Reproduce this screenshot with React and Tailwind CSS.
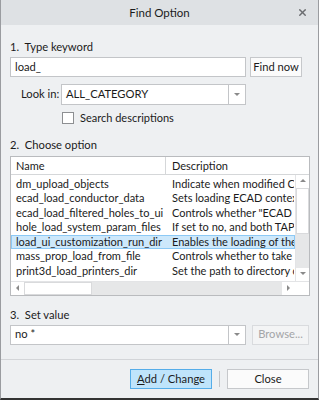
import { X } from 'lucide-react'

const rows = [
  ['dm_upload_objects', 'Indicate when modified Creo'],
  ['ecad_load_conductor_data', 'Sets loading ECAD context'],
  ['ecad_load_filtered_holes_to_ui', 'Controls whether "ECAD in'],
  ['hole_load_system_param_files', 'If set to no, and both TAP a'],
  ['load_ui_customization_run_dir', 'Enables the loading of the'],
  ['mass_prop_load_from_file', 'Controls whether to take in'],
  ['print3d_load_printers_dir', 'Set the path to directory co'],
]

function Arrow({ dir = 'down', className = '' }) {
  const pts = {
    down: '1,2 7,2 4,5',
    up: '1,5 7,5 4,2',
    left: '5,1 5,7 2,4',
    right: '2,1 2,7 5,4',
  }
  return (
    <svg width="8" height="8" viewBox="0 0 8 8" className={className}>
      <polygon points={pts[dir]} fill="#8a8a8a" />
    </svg>
  )
}

function Combo({ value, className = '' }) {
  return (
    <div className={`flex h-[20px] border border-[#c3c5c8] bg-white ${className}`}>
      <div className="flex flex-1 items-center pl-[4px] text-[#1b1b1b]">{value}</div>
      <div className="flex w-[17px] items-center justify-center border-l border-[#c3c5c8]">
        <Arrow />
      </div>
    </div>
  )
}

function Button({ children, className = '' }) {
  return (
    <div
      className={`flex h-[20px] items-center justify-center border border-[#c6c8cb] bg-[#fbfbfb] text-[#1b1b1b] ${className}`}
    >
      {children}
    </div>
  )
}

export default function App() {
  return (
    <div
      className="flex h-[400px] w-[319px] flex-col border-x border-b-2 border-x-[#9a9ca0] border-b-[#333] bg-[#eef0f2] text-[11.2px]"
      style={{ fontFamily: 'Lato, "Noto Sans", sans-serif' }}
    >
      <div className="relative flex h-[25px] shrink-0 items-center justify-center bg-[#dee1e4] text-[11.5px] text-[#1b1b1b]">
        Find Option
        <X size={11} strokeWidth={3} className="absolute right-[10px] top-[7px] text-[#6b6d70]" />
      </div>

      <div className="flex flex-1 flex-col px-[9px]">
        <div className="mt-[14px] h-[16px] leading-[16px] text-[#1b1b1b]">1.&nbsp; Type keyword</div>
        <div className="mt-[2px] flex gap-[4px]">
          <div className="flex h-[20px] w-[236px] items-center border border-[#c3c5c8] bg-white pl-[4px] text-[#1b1b1b]">
            load_
          </div>
          <Button className="w-[52px]">Find now</Button>
        </div>

        <div className="mt-[7px] flex items-center">
          <div className="w-[51px] shrink-0 whitespace-nowrap pl-[11px] text-[#1b1b1b]">Look in:</div>
          <Combo value="ALL_CATEGORY" className="h-[21px] w-[185px]" />
        </div>
        <div className="mt-[5px] flex items-center pl-[52px]">
          <div className="h-[12px] w-[12px] border border-[#8d8f92] bg-white" />
          <span className="ml-[6px] text-[11px] text-[#1b1b1b]">Search descriptions</span>
        </div>

        <div className="mt-[10px] h-[16px] leading-[16px] text-[#1b1b1b]">2.&nbsp; Choose option</div>
        <div className="mt-[3px] flex h-[140px] w-[300px] flex-col border border-[#b9bbbe] bg-white text-[11px] text-[#1b1b1b]">
          <div className="flex h-[18px] shrink-0 border-b border-[#d5d7d9]">
            <div className="w-[155px] border-r border-[#d5d7d9] pl-[5px] leading-[17px]">Name</div>
            <div className="flex-1 pl-[6px] leading-[17px]">Description</div>
          </div>
          <div className="flex min-h-0 flex-1">
            <div className="min-w-0 flex-1 overflow-hidden pt-[2px]">
              {rows.map(([name, desc], i) => (
                <div
                  key={name}
                  className={`flex h-[14.5px] items-center whitespace-nowrap leading-[14px] ${
                    i === 4 ? 'border border-[#8cc9f5] bg-[#cde8fb]' : 'border border-transparent'
                  }`}
                >
                  <div className="w-[154px] shrink-0 overflow-hidden pl-[4px]">{name}</div>
                  <div className="min-w-0 flex-1 overflow-hidden pl-[6px]">{desc}</div>
                </div>
              ))}
            </div>
            <div className="flex w-[14px] shrink-0 flex-col border-l border-[#e3e4e6] bg-[#e6e7e8]">
              <div className="flex h-[13px] items-center justify-center bg-white">
                <Arrow dir="up" />
              </div>
              <div className="h-[46px] border border-[#d9dadc] bg-white" />
              <div className="flex-1" />
              <div className="flex h-[13px] items-center justify-center bg-white">
                <Arrow dir="down" />
              </div>
            </div>
          </div>
          <div className="flex h-[14px] shrink-0 border-t border-[#e3e4e6]">
            <div className="flex flex-1 bg-[#e6e7e8]">
              <div className="flex w-[13px] items-center justify-center bg-white">
                <Arrow dir="left" />
              </div>
              <div className="w-[68px] border border-[#d9dadc] bg-white" />
              <div className="flex-1" />
              <div className="flex w-[13px] items-center justify-center bg-white">
                <Arrow dir="right" />
              </div>
            </div>
            <div className="w-[14px] bg-white" />
          </div>
        </div>

        <div className="mt-[11px] h-[16px] leading-[16px] text-[#1b1b1b]">3.&nbsp; Set value</div>
        <div className="mt-[2px] flex gap-[6px]">
          <Combo value="no *" className="w-[236px]" />
          <div className="flex h-[20px] w-[57px] items-center justify-center border border-[#d9dbde] bg-[#f3f4f5] text-[#a3a5a8]">
            Browse...
          </div>
        </div>
      </div>

      <div className="flex h-[39px] shrink-0 items-center justify-end gap-[7px] border-t border-[#d3d5d8] pr-[9px]">
        <div className="flex h-[20px] w-[82px] items-center justify-center border border-[#55ade9] bg-[#bfe4fb] text-[#1b1b1b]">
          <span className="underline">A</span>dd / Change
        </div>
        <div className="h-[16px] w-px bg-[#c3c5c8]" />
        <Button className="w-[82px]">Close</Button>
      </div>
    </div>
  )
}
